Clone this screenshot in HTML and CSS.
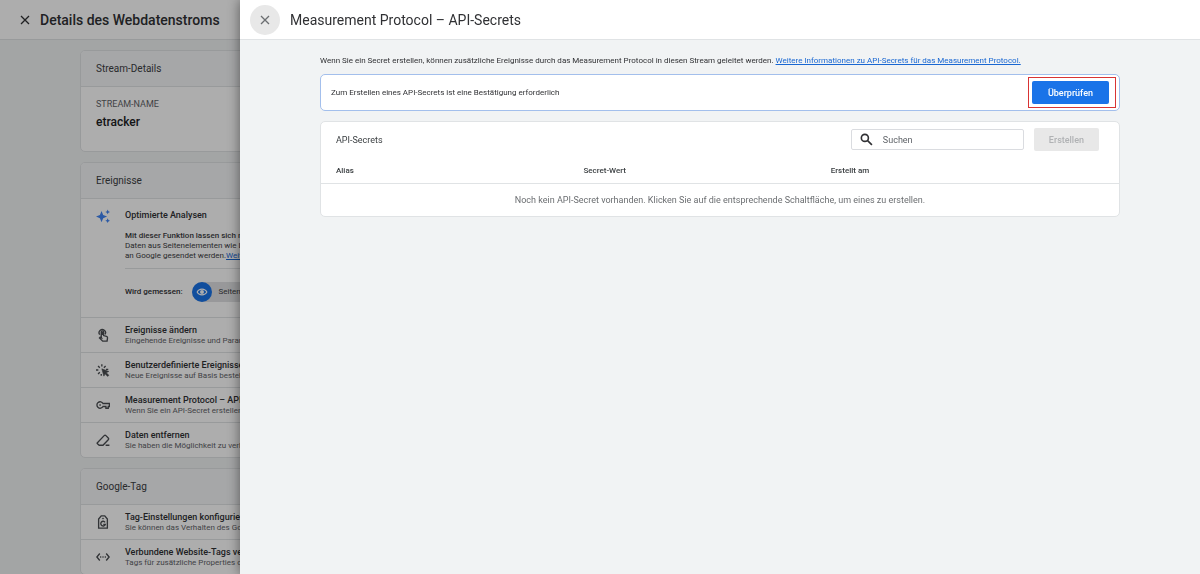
FILE: index.html
```html
<!DOCTYPE html>
<html lang="de">
<head>
	<meta charset="utf-8">
	<meta name="viewport" content="width=device-width, initial-scale=1">
	<title>Measurement Protocol – API-Secrets</title>
	<link rel="stylesheet" href="styles.css">
</head>
<body>
	<div class="page">
		<header class="bar page-bar">
			<button class="close" type="button" aria-label="Details schließen">
				<svg viewBox="0 0 10 10"><path d="M1 1l8 8M9 1L1 9"/></svg>
			</button>
			<h1 class="title strong">Details des Webdatenstroms</h1>
		</header>
		<main class="cards">
			<section class="card">
				<h2 class="card-head">Stream-Details</h2>
				<div class="stream">
					<div class="label">STREAM-NAME</div>
					<div class="name">etracker</div>
				</div>
			</section>

			<section class="card">
				<h2 class="card-head">Ereignisse</h2>
				<div class="row enhanced">
					<svg class="icon blue" viewBox="0 0 24 24"><path d="M9.500 3.500l2.800 6.700L19 13l-6.700 2.800L9.500 22.500l-2.800-6.700L0 13l6.700-2.800zM20 1l1.300 2.700L24 5l-2.700 1.300L20 9l-1.300-2.700L16 5l2.700-1.300zM20 16l1.300 2.700L24 20l-2.700 1.300L20 24l-1.300-2.700L16 20l2.700-1.300z"/></svg>
					<div class="row-text">
						<h3 class="row-title">Optimierte Analysen</h3>
						<p class="desc"><b>Mit dieser Funktion lassen sich neben Seitenaufrufen weitere Ereignisse messen.</b><br>
						Daten aus Seitenelementen wie Links und eingebetteten Videos können<br>
						an Google gesendet werden.<a href="#">Weitere Informationen</a></p>
						<div class="measured">
							<b>Wird gemessen:</b>
							<span class="chip">
								<span class="eye"><svg viewBox="0 0 24 24"><path d="M12 5C7 5 3 8 1 12c2 4 6 7 11 7s9-3 11-7c-2-4-6-7-11-7zm0 2.500c3.600 0 6.600 1.700 8.400 4.500-1.800 2.800-4.800 4.500-8.400 4.500S5.400 14.800 3.600 12C5.400 9.200 8.400 7.500 12 7.500zM12 8a4 4 0 100 8 4 4 0 000-8z"/></svg></span>
								Seitenaufrufe
							</span>
						</div>
					</div>
				</div>
				<div class="row">
					<svg class="icon line" viewBox="0 0 24 24"><path d="M6.500 11.500a5.500 5.500 0 1 1 9-.5M9 16V7a2 2 0 0 1 4 0v6l5 1.500c1.500.5 2 1.500 1.700 3L19 22.500h-7.500L6 17l1-1 2.500 1zM11 7v5"/></svg>
					<div class="row-text">
						<h3 class="row-title">Ereignisse ändern</h3>
						<p class="sub">Eingehende Ereignisse und Parameter ändern.</p>
					</div>
				</div>
				<div class="row">
					<svg class="icon line" viewBox="0 0 24 24"><path d="M10 2v4M3.500 5l3 3M16.500 5l-3 3M0 12h4M3.500 19l3-3M17 11h4M9 19v3"/><path class="solid" d="M10 10l12 4.500-4.500 2 4.500 4.500-2 2-4.500-4.500-2 4z"/></svg>
					<div class="row-text">
						<h3 class="row-title">Benutzerdefinierte Ereignisse erstellen</h3>
						<p class="sub">Neue Ereignisse auf Basis bestehender Ereignisse erstellen.</p>
					</div>
				</div>
				<div class="row">
					<svg class="icon line" viewBox="0 0 24 24"><path d="M12 9.500h11v5h-2v3h-4v-3h-5a5.500 5.500 0 1 1 0-5z"/><circle class="solid" cx="7" cy="12" r="1"/></svg>
					<div class="row-text">
						<h3 class="row-title">Measurement Protocol – API-Secrets</h3>
						<p class="sub">Wenn Sie ein API-Secret erstellen, können Sie zusätzliche Ereignisse senden.</p>
					</div>
				</div>
				<div class="row">
					<svg class="icon line" viewBox="0 0 24 24"><path d="M2 17L14 4.500q1.500-1.500 3 0L21 8.500q1.500 1.500 0 3L12 21H5.500L2 18zM16.500 21H23"/></svg>
					<div class="row-text">
						<h3 class="row-title">Daten entfernen</h3>
						<p class="sub">Sie haben die Möglichkeit zu verhindern, dass Daten gesendet werden.</p>
					</div>
				</div>
			</section>

			<section class="card">
				<h2 class="card-head">Google-Tag</h2>
				<div class="row">
					<svg class="icon line" viewBox="0 0 24 24"><path d="M4.500 22.500V7L9 1.500h6L19.500 7v15.500zM15.500 12.500a4 4 0 1 0 .5 3.500h-3.500"/><circle class="solid" cx="12" cy="6" r="1"/></svg>
					<div class="row-text">
						<h3 class="row-title">Tag-Einstellungen konfigurieren</h3>
						<p class="sub">Sie können das Verhalten des Google-Tags konfigurieren.</p>
					</div>
				</div>
				<div class="row">
					<svg class="icon line" viewBox="0 0 24 24"><path d="M6.500 6L1.500 12l5 6M17.500 6l5 6-5 6M7 12h2M11 12h2M15 12h2"/></svg>
					<div class="row-text">
						<h3 class="row-title">Verbundene Website-Tags verwalten</h3>
						<p class="sub">Tags für zusätzliche Properties oder Produkte laden.</p>
					</div>
				</div>
			</section>
		</main>
	</div>

	<div class="scrim"></div>

	<div class="drawer" role="dialog" aria-labelledby="drawer-title">
		<header class="bar">
			<button class="close round" type="button" aria-label="Schließen">
				<svg viewBox="0 0 10 10"><path d="M1 1l8 8M9 1L1 9"/></svg>
			</button>
			<h1 class="title" id="drawer-title">Measurement Protocol – API-Secrets</h1>
		</header>
		<div class="drawer-body">
			<p class="intro">Wenn Sie ein Secret erstellen, können zusätzliche Ereignisse durch das Measurement Protocol in diesen Stream geleitet werden. <a href="#">Weitere Informationen zu API-Secrets für das Measurement Protocol.</a></p>

			<div class="notice">
				<span>Zum Erstellen eines API-Secrets ist eine Bestätigung erforderlich</span>
				<div class="highlight"><button class="btn primary" type="button">Überprüfen</button></div>
			</div>

			<section class="card secrets">
				<div class="toolbar">
					<h2>API-Secrets</h2>
					<label class="search">
						<svg viewBox="0 0 24 24"><circle cx="9" cy="9" r="6.500"/><path d="M14 14l8 8"/></svg>
						<input type="text" placeholder="Suchen" aria-label="Suchen">
					</label>
					<button class="btn" type="button" disabled>Erstellen</button>
				</div>
				<table>
					<thead>
						<tr><th>Alias</th><th>Secret-Wert</th><th>Erstellt am</th></tr>
					</thead>
					<tbody>
						<tr><td colspan="3">Noch kein API-Secret vorhanden. Klicken Sie auf die entsprechende Schaltfläche, um eines zu erstellen.</td></tr>
					</tbody>
				</table>
			</section>
		</div>
	</div>
</body>
</html>
```
FILE: styles.css
```css
* {
	box-sizing: border-box;
}
body {
	margin: 0;
	background: #f1f3f4;
	color: #303134;
	font-family: Roboto, "Liberation Sans", sans-serif;
	font-size: 8px;
	line-height: 10px;
}
h1, h2, h3, p {
	margin: 0;
	font-weight: 400;
}
b {
	font-weight: 500;
}
a {
	color: #1967d2;
}
button, input {
	font-family: inherit;
}

/* top bars */
.bar {
	display: flex;
	align-items: center;
	gap: 10px;
	height: 40px;
	padding: 0 10px;
	background: #fff;
	border-bottom: 1px solid #e0e3e5;
}
.page-bar {
	gap: 0;
}
.title {
	font-size: 14px;
	line-height: 20px;
}
.title.strong {
	font-weight: 500;
}
.close {
	display: flex;
	align-items: center;
	justify-content: center;
	width: 30px;
	height: 30px;
	padding: 0;
	border: 0;
	border-radius: 50%;
	background: none;
}
.close.round {
	background: #e8e8e8;
}
.close svg {
	width: 10px;
	height: 10px;
	fill: none;
	stroke: #303134;
	stroke-width: 1.3;
}
.close.round svg {
	stroke: #6b6e71;
}

/* page behind the drawer */
.page {
	height: 100vh;
	overflow: hidden;
	white-space: nowrap;
}
.cards {
	display: flex;
	flex-direction: column;
	gap: 10px;
	padding: 10px 80px;
}
.card {
	background: #fff;
	border: 1px solid #e0e3e5;
	border-radius: 5px;
	overflow: hidden;
}
.card-head {
	padding: 11px 15px 10px;
	background: #f5f6f8;
	font-size: 10px;
	line-height: 14px;
	color: #3c4043;
}
.stream {
	padding: 11px 15px 20px;
	border-top: 1px solid #e0e3e5;
}
.label {
	font-size: 9px;
	line-height: 12px;
	color: #5f6368;
}
.name {
	padding-top: 3px;
	font-size: 12px;
	line-height: 18px;
	font-weight: 500;
	color: #202124;
}
.row {
	display: flex;
	align-items: center;
	gap: 15px;
	height: 35px;
	padding: 0 15px;
	border-top: 1px solid #e0e3e5;
}
.icon {
	flex: none;
	width: 14px;
	height: 14px;
	fill: #4285f4;
}
.icon.line {
	fill: none;
	stroke: #4a4d51;
	stroke-width: 2.3;
}
.icon .solid {
	fill: #4a4d51;
	stroke-width: 1;
}
.row-text {
	flex: 1;
}
.row-title {
	font-size: 9px;
	line-height: 12px;
	font-weight: 500;
}
.sub {
	color: #5f6368;
}
.enhanced {
	align-items: flex-start;
	height: auto;
	padding-top: 10px;
	padding-bottom: 15px;
}
.desc {
	padding: 10px 0 7px;
	border-bottom: 1px solid #e0e3e5;
	color: #3c4043;
}
.measured {
	display: flex;
	align-items: center;
	gap: 9px;
	padding-top: 13px;
}
.chip {
	display: flex;
	align-items: center;
	gap: 7px;
	height: 20px;
	padding-right: 10px;
	border-radius: 10px;
	background: #e0e1e3;
	color: #3c4043;
}
.eye {
	display: flex;
	align-items: center;
	justify-content: center;
	width: 20px;
	height: 20px;
	border-radius: 50%;
	background: #1a73e8;
}
.eye svg {
	width: 12px;
	height: 12px;
	fill: #fff;
}

.scrim {
	position: fixed;
	inset: 0;
	background: rgba(0, 0, 0, .32);
}

/* drawer */
.drawer {
	position: fixed;
	inset: 0 0 0 20%;
	background: #f1f3f4;
	box-shadow: 0 0 12px rgba(0, 0, 0, .5);
}
.drawer-body {
	padding: 16px 80px;
}
.intro {
	padding-bottom: 8px;
}
.notice {
	display: flex;
	align-items: center;
	justify-content: space-between;
	height: 37px;
	margin-bottom: 10px;
	padding: 0 3px 0 10px;
	background: #fff;
	border: 1px solid #a3bfec;
	border-radius: 5px;
}
.highlight {
	padding: 3px 6px 3px 3px;
	border: 1px solid #d93434;
}
.btn {
	display: block;
	height: 23px;
	padding: 0 15px;
	border: 0;
	border-radius: 2px;
	background: #e8e8e8;
	color: #b0b2b4;
	font-size: 9px;
	font-weight: 500;
}
.btn.primary {
	padding: 0 16px;
	background: #1a73e8;
	color: #fff;
}
.toolbar {
	display: flex;
	align-items: center;
	gap: 10px;
	padding: 6px 20px 6px 15px;
}
.toolbar h2 {
	flex: 1;
	font-size: 9px;
	line-height: 12px;
	color: #3c4043;
}
.search {
	display: flex;
	align-items: center;
	gap: 10px;
	width: 173px;
	height: 21px;
	padding: 0 8px;
	border: 1px solid #dadce0;
	border-radius: 2px;
}
.search svg {
	flex: none;
	width: 13px;
	height: 13px;
	fill: none;
	stroke: #303134;
	stroke-width: 3;
}
.search input {
	flex: 1;
	min-width: 0;
	padding: 0;
	border: 0;
	outline: 0;
	background: none;
	font-size: 9px;
}
.search input::placeholder {
	color: #5f6368;
}
table {
	width: 100%;
	table-layout: fixed;
	border-collapse: collapse;
}
th {
	width: 31%;
	padding: 9px 15px 7px;
	border-bottom: 1px solid #e0e3e5;
	text-align: left;
	font-weight: 500;
	color: #3c4043;
}
th:last-child {
	width: auto;
}
td {
	padding: 10px 15px;
	text-align: center;
	font-size: 9px;
	line-height: 12px;
	color: #6b6e71;
}
```
